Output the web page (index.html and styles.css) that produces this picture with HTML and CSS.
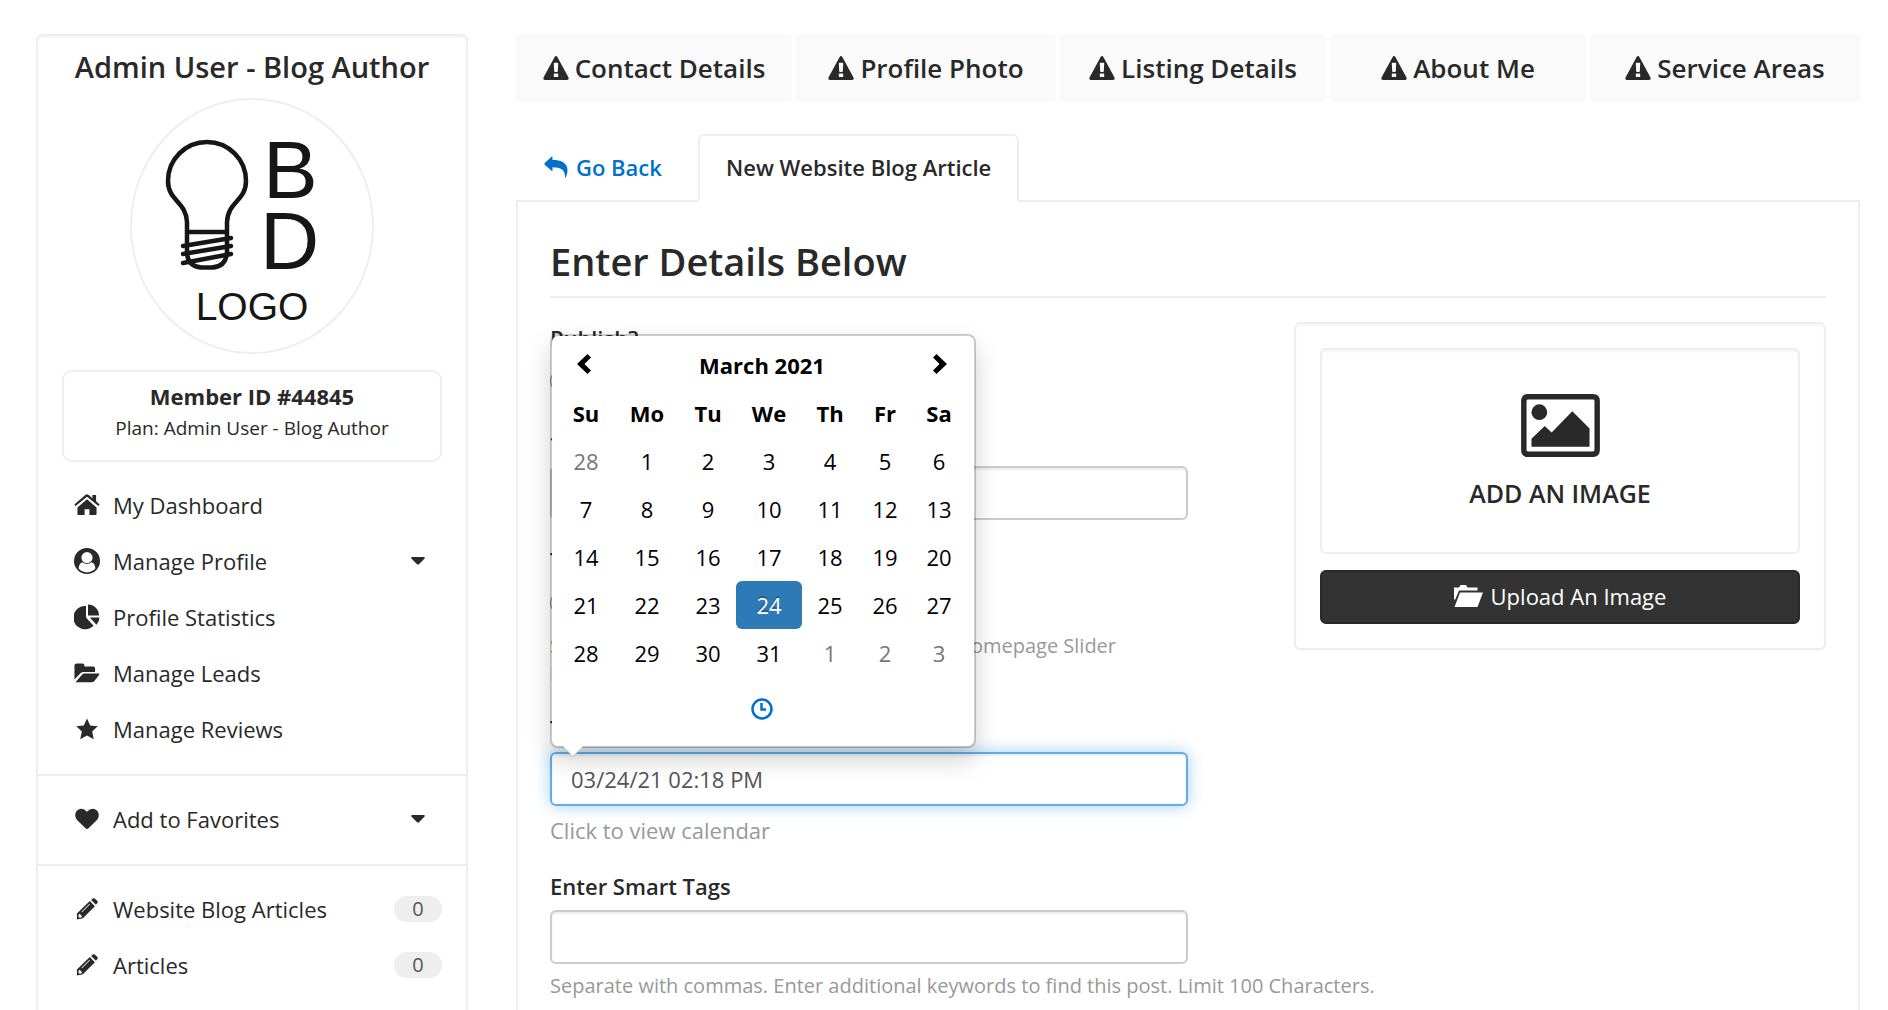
FILE: index.html
```html
<!DOCTYPE html>
<html lang="en">
<head>
  <meta charset="UTF-8" />
  <meta name="viewport" content="width=device-width, initial-scale=1.0"/>
  <title>New Website Blog Article</title>
  <link rel="stylesheet" href="styles.css">
</head>
<body>
  <svg class="sprite" aria-hidden="true">
    <symbol id="icon-warning" viewBox="0 0 26 24">
      <path fill-rule="evenodd" d="M11.5 1.2Q13 -1 14.5 1.2L25.5 21.4Q26.2 24 23.7 24H2.3Q-.2 24 .5 21.4ZM10.8 7.500l.4 7.800q.1.700.8.700h2q.7 0 .8-.7l.4-7.800q0-.7-.7-.7h-3q-.7 0-.7.700ZM11.400 17.400q-.6 0-.6.600v2.400q0 .6.600.6h3.200q.6 0 .6-.6V18q0-.6-.6-.6Z"/>
    </symbol>
    <symbol id="icon-caret" viewBox="0 0 14 8">
      <path d="M1 0h12q1.400.6.6 1.600L8 7.200q-1 .8-2 0L.4 1.600Q-.4.600 1 0Z"/>
    </symbol>
    <symbol id="icon-pencil" viewBox="0 0 24 24">
      <path fill-rule="evenodd" d="M15 3.400l5.600 5.600L7.500 22.200l-6.500 1.300L1 17ZM3.800 17.200l-1 1v3h3l1-1-.9-.3-.3-1.500-1.400-.3ZM14.700 6.200L6 14.900l.6.600 8.700-8.700ZM16.500 2.200l1.800-1.600q1.100-.9 2.200 0L23.300 3.300q.9 1.100 0 2.200L21.800 7.300Z"/>
    </symbol>
  </svg>

  <div class="page">
    <aside class="sidebar">
      <h2 class="user-name">Admin User - Blog Author</h2>

      <svg class="avatar" viewBox="0 0 244 256" role="img" aria-label="BD Logo">
        <ellipse cx="122" cy="128" rx="121" ry="127" fill="#fff" stroke="#eee" stroke-width="2"/>
        <g fill="none" stroke="#161616" stroke-width="4.500" stroke-linecap="round">
          <path d="M57 134V124C56 103 38 103 38 83A39 39 0 0 1 116 83C116 103 98 103 97 124V154Q96 169 82 169.500H71Q57 168 57 154V134H97"/>
          <path d="M53 148L101 140M53 156L101 148M53 165L101 156"/>
        </g>
        <text class="logo-letter" x="133" y="100">B</text>
        <text class="logo-letter" x="130" y="171">D</text>
        <text class="logo-word" x="122" y="222">LOGO</text>
      </svg>

      <div class="member-box">
        <strong>Member ID #44845</strong>
        <span>Plan: Admin User - Blog Author</span>
      </div>

      <nav>
        <ul class="menu">
          <li><a href="#">
            <svg class="icon" viewBox="0 0 24 20"><path d="M12 4.800L3.200 12.200V18.500q0 .7.800.7H9.800V14h4.400v5.200h5.800q.8 0 .8-.7V12.200ZM12 0Q12.600 0 13.300.6L17 3.700V.8h3.400v5.800L23.700 9.500l-1.200 1.400L12 2.300 1.500 10.900.3 9.500 10.700.6Q11.400 0 12 0Z"/></svg>
            My Dashboard</a></li>
          <li><a href="#">
            <svg class="icon icon-round" viewBox="0 0 26 26"><path fill-rule="evenodd" d="M13 0a13 13 0 1 1 0 26a13 13 0 1 1 0-26ZM4.600 20.600Q8 24.400 13 24.400T21.400 20.600Q20.900 15 17.600 14.200Q15.500 16 13 16T8.400 14.200Q5.100 15 4.600 20.600ZM13 4A5.600 5.600 0 1 0 13 15.200A5.600 5.600 0 1 0 13 4Z"/></svg>
            Manage Profile
            <svg class="caret"><use href="#icon-caret"/></svg></a></li>
          <li><a href="#">
            <svg class="icon icon-round" viewBox="0 0 26 26"><path d="M12 2v11.500l7.600 8.200A11.700 11.700 0 1 1 12 2ZM14 .6A11 11 0 0 1 25 11.600H14ZM15.800 13.500H25.500a11 11 0 0 1-3 7.200Z"/></svg>
            Profile Statistics</a></li>
          <li><a href="#">
            <svg class="icon" viewBox="0 0 28 22"><path d="M.5 18V3Q.5.700 2.800.700h6.400q2 0 2 2v1.200h9.300q2.200 0 2.200 2.200v3.700H10.400q-1.900 0-3.200 1.200ZM1.500 21l7.400-8.400q1-1 2.400-1h15.300q1.200.1.500 1.200L22 19.600Q20.800 21 19 21Z"/></svg>
            Manage Leads</a></li>
          <li><a href="#">
            <svg class="icon" viewBox="0 0 24 24"><path d="M12 .5l3.500 7.600 8.200.9-6.100 5.600 1.800 8.700L12 19l-7.400 4.300 1.800-8.700L.3 9l8.200-.9Z"/></svg>
            Manage Reviews</a></li>
        </ul>
        <ul class="menu">
          <li><a href="#">
            <svg class="icon" viewBox="0 0 26 24"><path d="M13 23Q12.200 23 11.400 22.200L2.400 13.400C-1 9.600-.4 3.400 3.800 1.500Q9-.4 13 4.200Q17-.4 22.200 1.500C26.400 3.400 27 9.600 23.600 13.400L14.600 22.200Q13.800 23 13 23Z"/></svg>
            Add to Favorites
            <svg class="caret"><use href="#icon-caret"/></svg></a></li>
        </ul>
        <ul class="menu">
          <li><a href="#"><svg class="icon"><use href="#icon-pencil"/></svg>Website Blog Articles<span class="badge">0</span></a></li>
          <li><a href="#"><svg class="icon"><use href="#icon-pencil"/></svg>Articles<span class="badge">0</span></a></li>
        </ul>
      </nav>
    </aside>

    <main class="content">
      <nav class="steps">
        <a href="#"><svg><use href="#icon-warning"/></svg>Contact Details</a>
        <a href="#"><svg><use href="#icon-warning"/></svg>Profile Photo</a>
        <a href="#"><svg><use href="#icon-warning"/></svg>Listing Details</a>
        <a href="#"><svg><use href="#icon-warning"/></svg>About Me</a>
        <a href="#"><svg><use href="#icon-warning"/></svg>Service Areas</a>
      </nav>

      <div class="tabs">
        <a href="#" class="tab tab-back">
          <svg viewBox="0 0 24 22"><path d="M.5 7.200L7.500 .7Q8.500 0 8.500 1.200V4C17 4 23.500 6.500 23.500 14.500Q23.500 18.500 21.600 21.600Q20.900 22 21 21C21.200 14 17 11.200 8.500 11.200V14.200Q8.500 15.400 7.500 14.700L.5 8.400Q0 7.800.5 7.200Z"/></svg>
          Go Back</a>
        <a href="#" class="tab tab-active">New Website Blog Article</a>
      </div>

      <section class="panel">
        <h1>Enter Details Below</h1>

        <div class="image-card">
          <div class="dropzone">
            <svg viewBox="0 0 80 64"><path fill-rule="evenodd" d="M7 0H73Q80 0 80 7V57Q80 64 73 64H7Q0 64 0 57V7Q0 0 7 0ZM7 5.500Q5.500 5.500 5.500 7V57Q5.500 58.500 7 58.500H73Q74.500 58.500 74.500 57V7Q74.500 5.500 73 5.500Z"/><circle cx="18.500" cy="18.500" r="8"/><path d="M10.500 53.500V45.500L24 32.500 31 39 52 17.500 69.500 35V53.500Z"/></svg>
            <span>ADD AN IMAGE</span>
          </div>
          <button type="button" class="upload">
            <svg viewBox="0 0 29 22"><path d="M0 14V2.500H5L6.500 0H12L13.500 2.500H23.500V5.500H5L1 15ZM6 7.500H29L23.500 22H.5Z"/></svg>
            Upload An Image
          </button>
        </div>

        <form class="fields">
          <fieldset class="group">
            <legend>Publish?</legend>
            <label class="choice"><input type="radio" name="publish"> Yes</label>
          </fieldset>
          <div class="group">
            <label for="title"><span class="required">*</span> Title</label>
            <input type="text" id="title">
          </div>
          <fieldset class="group">
            <legend>Top Slider</legend>
            <label class="choice"><input type="radio" name="slider"> Yes</label>
            <p class="help small">Select yes to feature this blog article on the Homepage Slider<br>Latest posts first</p>
          </fieldset>
          <div class="group">
            <label for="date">Time and Date</label>
            <div class="date-field">
              <input type="text" id="date" class="focused" value="03/24/21 02:18 PM">
              <div class="calendar">
                <div class="calendar-head">
                  <button type="button" aria-label="Previous month"><svg viewBox="0 0 14 20"><path d="M10.500 0L14 3.500 7.500 10 14 16.500 10.500 20 0 10Z"/></svg></button>
                  <span>March 2021</span>
                  <button type="button" aria-label="Next month"><svg viewBox="0 0 14 20"><path d="M3.500 0L0 3.500 6.500 10 0 16.500 3.500 20 14 10Z"/></svg></button>
                </div>
                <table>
                  <colgroup><col><col class="wide"><col><col class="wide"><col><col class="narrow"><col class="narrow"></colgroup>
                  <thead>
                    <tr><th>Su</th><th>Mo</th><th>Tu</th><th>We</th><th>Th</th><th>Fr</th><th>Sa</th></tr>
                  </thead>
                  <tbody>
                    <tr><td class="muted">28</td><td>1</td><td>2</td><td>3</td><td>4</td><td>5</td><td>6</td></tr>
                    <tr><td>7</td><td>8</td><td>9</td><td>10</td><td>11</td><td>12</td><td>13</td></tr>
                    <tr><td>14</td><td>15</td><td>16</td><td>17</td><td>18</td><td>19</td><td>20</td></tr>
                    <tr><td>21</td><td>22</td><td>23</td><td class="selected">24</td><td>25</td><td>26</td><td>27</td></tr>
                    <tr><td>28</td><td>29</td><td>30</td><td>31</td><td class="muted">1</td><td class="muted">2</td><td class="muted">3</td></tr>
                  </tbody>
                </table>
                <button type="button" class="time-button" aria-label="Select time">
                  <svg viewBox="0 0 22 22"><circle cx="11" cy="11" r="9.500"/><path d="M10.500 5V11.500H15"/></svg>
                </button>
              </div>
            </div>
            <p class="help">Click to view calendar</p>
          </div>
          <div class="group">
            <label for="tags">Enter Smart Tags</label>
            <input type="text" id="tags">
            <p class="help small">Separate with commas. Enter additional keywords to find this post. Limit 100 Characters.</p>
          </div>
        </form>
      </section>
    </main>
  </div>
</body>
</html>
```
FILE: styles.css
```css
* {
  box-sizing: border-box;
}

html {
  overflow: hidden;
}

body {
  margin: 0;
  font-family: "Open Sans", sans-serif;
  font-size: 22px;
  line-height: 32px;
  color: #292929;
  background-color: #fff;
}

a {
  color: inherit;
  text-decoration: none;
}

svg {
  fill: currentColor;
  flex-shrink: 0;
}

.sprite {
  position: absolute;
  width: 0;
  height: 0;
}

.page {
  display: flex;
  align-items: flex-start;
  gap: 48px;
  padding: 34px 28px 0 36px;
}

/* Sidebar */
.sidebar {
  width: 432px;
  flex-shrink: 0;
  padding-bottom: 32px;
  border: 2px solid #eee;
  border-radius: 6px;
  box-shadow: inset 0 2px 2px rgba(0,0,0,0.04);
}

.user-name {
  margin: 13px 0;
  font-size: 29px;
  line-height: 36px;
  font-weight: 600;
  text-align: center;
}

.avatar {
  display: block;
  width: 244px;
  height: 256px;
  margin: 0 auto 16px;
}

.logo-letter {
  font-family: "Liberation Sans", sans-serif;
  font-size: 82px;
  fill: #161616;
}

.logo-word {
  font-family: "Liberation Sans", sans-serif;
  font-size: 39px;
  fill: #161616;
  text-anchor: middle;
}

.member-box {
  display: flex;
  flex-direction: column;
  margin: 0 24px 16px;
  padding: 8px 16px 16px;
  border: 2px solid #eee;
  border-radius: 10px;
  text-align: center;
}

.member-box strong {
  font-weight: 700;
}

.member-box span {
  font-size: 19px;
}

.menu {
  list-style: none;
  margin: 0;
  padding: 16px 24px;
  border-bottom: 2px solid #eee;
}

.menu:first-child {
  padding-top: 0;
}

.menu:last-child {
  border-bottom: none;
}

.menu a {
  display: flex;
  align-items: center;
  height: 56px;
  padding: 0 0 2px 12px;
}

.icon {
  width: 26px;
  height: 22px;
  margin-right: 13px;
}

.icon-round {
  height: 26px;
}

.caret {
  width: 14px;
  height: 8px;
  margin: 0 17px 0 auto;
}

.badge {
  width: 48px;
  margin-left: auto;
  border-radius: 13px;
  background-color: #eee;
  color: #555;
  font-size: 20px;
  line-height: 26px;
  text-align: center;
}

/* Main column */
.content {
  flex: 1;
  min-width: 0;
}

.steps {
  display: grid;
  grid-template-columns: 276fr 260fr 266fr 256fr 270fr;
  gap: 4px;
  margin-bottom: 32px;
}

.steps a {
  display: flex;
  align-items: center;
  justify-content: center;
  gap: 6px;
  height: 68px;
  border-radius: 4px;
  background-color: #fafafa;
  font-size: 26px;
  font-weight: 600;
}

.steps svg {
  width: 26px;
  height: 24px;
}

.tabs {
  display: flex;
  margin-bottom: -2px;
}

.tab {
  display: flex;
  align-items: center;
  gap: 8px;
  height: 68px;
  padding: 0 26px 2px;
  border: 2px solid transparent;
  font-size: 22px;
  font-weight: 600;
}

.tab svg {
  width: 24px;
  height: 22px;
}

.tab-back {
  width: 182px;
  color: #0070cd;
}

.tab-active {
  border-color: #eee;
  border-bottom-color: #fff;
  border-radius: 6px 6px 0 0;
  background-color: #fff;
  position: relative;
}

.panel {
  padding: 32px;
  border: 2px solid #eee;
}

.panel h1 {
  margin: 0 0 24px;
  padding-bottom: 8px;
  border-bottom: 2px solid #eee;
  font-size: 38px;
  line-height: 54px;
  font-weight: 600;
}

/* Form */
.group {
  margin: 0 0 24px;
  padding: 0;
  border: none;
}

.group legend,
.group > label {
  display: block;
  margin-bottom: 8px;
  padding: 0;
  font-weight: 600;
}

.group > .choice {
  font-weight: 400;
}

.choice input {
  width: 24px;
  height: 24px;
  margin: 0;
  vertical-align: middle;
}

.fields input[type="text"] {
  display: block;
  width: 50%;
  height: 54px;
  padding: 0 19px;
  border: 2px solid #ccc;
  border-radius: 6px;
  box-shadow: inset 0 2px 2px rgba(0,0,0,0.08);
  outline: none;
  background-color: #fff;
  color: #555;
  font-family: inherit;
  font-size: 22px;
}

.fields input[type="text"].focused {
  border-color: #5eaeea;
  box-shadow: inset 0 2px 2px rgba(0,0,0,0.08), 0 0 16px rgba(102,175,233,0.6);
}

.required {
  color: #c00;
}

.help {
  margin: 0;
  padding-top: 8px;
  color: #999;
}

.small {
  font-size: 20px;
  line-height: 28px;
}

/* Calendar popup */
.date-field {
  position: relative;
}

.calendar {
  position: absolute;
  left: 0;
  bottom: 58px;
  width: 426px;
  padding: 5px 8px 5px 6px;
  border: 2px solid #ccc;
  border-color: rgba(0,0,0,0.2);
  border-radius: 8px;
  background-color: #fff;
  background-clip: padding-box;
  box-shadow: 0 12px 24px rgba(0,0,0,0.18);
  color: #000;
}

.calendar::before,
.calendar::after {
  content: "";
  position: absolute;
  left: 10px;
  top: 100%;
  border: 11px solid transparent;
  border-top-color: #bbb;
  border-bottom: none;
}

.calendar::after {
  left: 11px;
  border-width: 10px;
  border-top-color: #fff;
}

.calendar button {
  border: none;
  background: none;
  cursor: pointer;
}

.calendar-head {
  display: flex;
  align-items: center;
  justify-content: space-between;
  height: 48px;
  font-weight: 700;
}

.calendar-head button {
  width: 52px;
  padding: 0;
}

.calendar-head svg {
  width: 14px;
  height: 20px;
}

.calendar table {
  width: 100%;
  table-layout: fixed;
  border-collapse: collapse;
}

.calendar .wide {
  width: 66px;
}

.calendar .narrow {
  width: 54px;
}

.calendar th,
.calendar td {
  height: 48px;
  padding: 0;
  text-align: center;
}

.calendar td.muted {
  color: #777;
}

.calendar td.selected {
  border-radius: 6px;
  background-color: #2d7ab6;
  color: #fff;
  text-shadow: 0 -2px 0 rgba(0,0,0,0.25);
}

.time-button {
  display: flex;
  align-items: center;
  justify-content: center;
  width: 100%;
  height: 64px;
  color: #0070cd;
}

.time-button svg {
  width: 22px;
  height: 22px;
  fill: none;
  stroke: currentColor;
  stroke-width: 2.5;
}

/* Image upload */
.image-card {
  float: right;
  width: 532px;
  padding: 24px;
  border: 2px solid #eee;
  border-radius: 6px;
  box-shadow: inset 0 2px 2px rgba(0,0,0,0.04);
}

.dropzone {
  display: flex;
  flex-direction: column;
  align-items: center;
  gap: 20px;
  margin-bottom: 16px;
  padding: 44px 0 43px;
  border: 2px solid #eee;
  border-radius: 6px;
  box-shadow: inset 0 2px 2px rgba(0,0,0,0.04);
  font-size: 25px;
  font-weight: 600;
}

.dropzone svg {
  width: 79px;
  height: 63px;
}

.upload {
  display: flex;
  align-items: center;
  justify-content: center;
  gap: 8px;
  width: 100%;
  height: 54px;
  padding: 0 6px 2px;
  border: 2px solid #292929;
  border-radius: 6px;
  background-color: #333;
  color: #fff;
  font-family: inherit;
  font-size: 22px;
  cursor: pointer;
}

.upload svg {
  width: 29px;
  height: 22px;
}
```
